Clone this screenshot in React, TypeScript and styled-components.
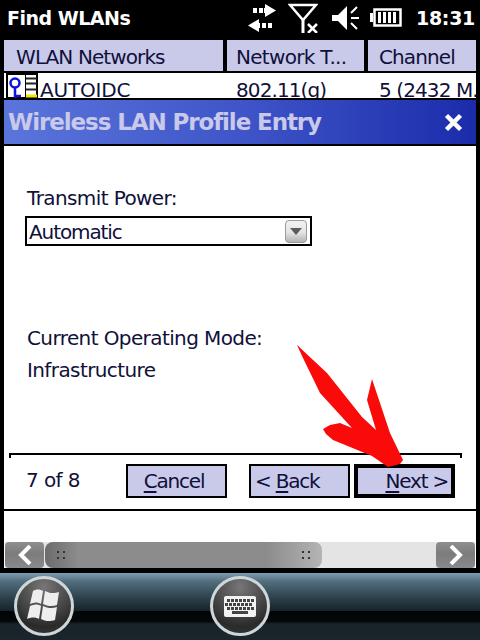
import React from "react";
import styled, { createGlobalStyle } from "styled-components";

const GlobalStyle = createGlobalStyle`
  html, body {
    margin: 0;
    padding: 0;
    background: #000;
  }
  body {
    font-family: "DejaVu Sans", "Liberation Sans", sans-serif;
  }
`;

const Screen = styled.div`
  position: relative;
  width: 480px;
  height: 640px;
  overflow: hidden;
  background: #000;
  display: flex;
  flex-direction: column;
`;

const StatusBar = styled.div`
  height: 40px;
  flex: none;
  display: flex;
  align-items: center;
  padding: 0 5px 5px 7px;
  box-sizing: border-box;
  color: #fff;
`;

const AppTitle = styled.div`
  flex: 1;
  font-size: 19px;
  font-weight: 700;
  letter-spacing: -0.5px;
`;

const StatusIcon = styled.svg<{ $gap?: number }>`
  display: block;
  flex: none;
  margin-left: ${(p) => p.$gap ?? 0}px;
`;

const Clock = styled.div`
  font-size: 19px;
  font-weight: 700;
  letter-spacing: -0.3px;
  margin-left: 14px;
`;

const ListHeader = styled.div`
  height: 31px;
  flex: none;
  margin: 0 4px;
  display: flex;
  gap: 4px;
`;

const HeaderCell = styled.div<{ $width: number; $indent: number; $track: number }>`
  width: ${(p) => p.$width}px;
  flex: none;
  background: #c9c9ea;
  color: #10103a;
  font-size: 20px;
  line-height: 34px;
  padding-left: ${(p) => p.$indent}px;
  box-sizing: border-box;
  white-space: nowrap;
  overflow: hidden;
  letter-spacing: ${(p) => p.$track}px;
`;

const ListRow = styled.div`
  height: 25px;
  flex: none;
  margin: 2px 4px 0;
  background: #fff;
  display: flex;
  overflow: hidden;
  color: #10103a;
`;

const RowCell = styled.div<{ $width: number; $indent: number; $track: number }>`
  width: ${(p) => p.$width}px;
  flex: none;
  display: flex;
  font-size: 20px;
  line-height: 34px;
  padding-left: ${(p) => p.$indent}px;
  box-sizing: border-box;
  white-space: nowrap;
  overflow: hidden;
  letter-spacing: ${(p) => p.$track}px;
`;

const NetworkIcon = styled.svg`
  flex: none;
  display: block;
  margin-right: 2px;
`;

const Dialog = styled.div`
  margin: 2px 4px 0;
  flex: none;
  display: flex;
  flex-direction: column;
`;

const DialogTitle = styled.div`
  height: 44px;
  background: linear-gradient(90deg, #5a75db 0%, #3f55c8 50%, #1b2cab 100%);
  display: flex;
  align-items: center;
  justify-content: space-between;
  padding: 0 13px 0 4px;
`;

const DialogTitleText = styled.div`
  color: #c9c9ea;
  font-size: 23px;
  font-weight: 700;
  letter-spacing: -1.1px;
`;

const DialogBody = styled.div`
  margin-top: 2px;
  height: 365px;
  background: #fff;
  box-sizing: border-box;
  padding: 39px 0 0 21px;
  display: flex;
  flex-direction: column;
  border-bottom: 2px solid #000;
`;

const Label = styled.div`
  color: #10103a;
  font-size: 20px;
  line-height: 26px;
  letter-spacing: -0.6px;
  white-space: nowrap;
`;

const FieldLabel = styled(Label)`
  margin-left: 2px;
`;

const Combo = styled.div`
  width: 287px;
  height: 30px;
  box-sizing: border-box;
  margin-top: 5px;
  border: 2px solid #000;
  display: flex;
  align-items: center;
  justify-content: space-between;
  padding: 1px 3px 0 2px;
  font-size: 20px;
  letter-spacing: -1.1px;
  color: #10103a;
`;

const ComboArrow = styled.div`
  width: 22px;
  height: 23px;
  box-sizing: border-box;
  border: 1px solid #9a9a9a;
  border-radius: 4px;
  background: linear-gradient(180deg, #f2f2f2 0%, #e4e4e4 55%, #b4b4b4 100%);
  display: flex;
  align-items: center;
  justify-content: center;
  &::before {
    content: "";
    border-left: 6px solid transparent;
    border-right: 6px solid transparent;
    border-top: 7px solid #5b5b5b;
  }
`;

const ModeBlock = styled.div`
  margin-top: 79px;
  display: flex;
  flex-direction: column;
  gap: 6px;
`;

const WizardFooter = styled.div`
  margin: 70px 0 0 -16px;
  width: 453px;
  border-top: 2px solid #000;
  position: relative;
  &::before,
  &::after {
    content: "";
    position: absolute;
    top: 0;
    width: 2px;
    height: 3px;
    background: #000;
  }
  &::before {
    left: 0;
  }
  &::after {
    right: 0;
  }
`;

const WizardRow = styled.div`
  display: flex;
  align-items: flex-start;
  margin-top: 9px;
  padding-left: 17px;
`;

const StepText = styled(Label)`
  width: 100px;
  flex: none;
  line-height: 32px;
`;

const WizardButton = styled.div<{
  $active?: boolean;
  $left?: number;
  $align: "center" | "flex-start" | "flex-end";
}>`
  width: 101px;
  height: 34px;
  flex: none;
  box-sizing: border-box;
  margin-left: ${(p) => p.$left ?? 0}px;
  border: ${(p) => (p.$active ? 4 : 2)}px solid #000;
  background: #c9c9ea;
  color: #10103a;
  font-size: 20px;
  letter-spacing: -1.2px;
  white-space: nowrap;
  display: flex;
  align-items: center;
  justify-content: ${(p) => p.$align};
  padding: ${(p) => (p.$align === "center" ? "0 5px 0 0" : "0 3px 0 4px")};
  u {
    text-underline-offset: 3px;
  }
`;

const LowerBand = styled.div`
  margin: 0 4px;
  height: 57px;
  flex: none;
  background: #fff;
  display: flex;
  flex-direction: column;
  justify-content: flex-end;
`;

const ScrollBar = styled.div`
  height: 26px;
  margin: 0 1px;
  display: flex;
  background: #e4e4e4;
`;

const ScrollButton = styled.div`
  width: 39px;
  flex: none;
  border-radius: 4px;
  background: linear-gradient(180deg, #8f8f8f 0%, #7c7c7c 45%, #8a8a8a 100%);
  display: flex;
  align-items: center;
  justify-content: center;
`;

const ScrollThumb = styled.div`
  width: 277px;
  flex: none;
  margin-left: 1px;
  border-radius: 8px;
  background: linear-gradient(
    90deg,
    #6c6c6c 0%,
    #8c8c8c 12%,
    #8c8c8c 80%,
    #b4b4b4 100%
  );
  display: flex;
  align-items: center;
  justify-content: space-between;
  padding: 0 11px;
  box-sizing: border-box;
`;

const Grip = styled.svg`
  display: block;
`;

const ScrollTrack = styled.div`
  flex: 1;
`;

const Taskbar = styled.div`
  margin-top: 5px;
  flex: 1;
  display: flex;
  gap: 136px;
  padding: 3px 0 0 14px;
  box-sizing: border-box;
  background: linear-gradient(
    180deg,
    #7f9db2 0%,
    #53707f 12%,
    #2f444f 35%,
    #18242a 56%,
    #020505 57%,
    #040808 72%,
    #18232a 76%,
    #1a262b 100%
  );
`;

const RoundButton = styled.div`
  width: 60px;
  height: 60px;
  flex: none;
  box-sizing: border-box;
  border-radius: 50%;
  border: 3px solid #cfd6d8;
  background: radial-gradient(
    circle at 50% 15%,
    #777 0%,
    #4a4a4a 45%,
    #2a2a2a 75%,
    #3c3c3c 100%
  );
  display: flex;
  align-items: center;
  justify-content: center;
`;

const RedArrow = styled.svg`
  position: absolute;
  left: 290px;
  top: 338px;
`;

const keyRows = [
  { y: 3, xs: [3, 7, 11, 15, 19, 23, 27] },
  { y: 7, xs: [1, 5, 9, 13, 17, 21, 25] },
  { y: 11, xs: [3, 7, 11, 15, 19, 23, 27] },
];

const App: React.FC = () => {
  return (
    <Screen>
      <GlobalStyle />
      <StatusBar>
        <AppTitle>Find WLANs</AppTitle>
        <StatusIcon width="30" height="28" viewBox="0 0 30 28" fill="#fff">
          <path d="M6 4h4v5H6zM12 4h4v5h-4zM18 4v-4l11 6.5L18 13V9h-1V4z" />
          <path d="M12 15v4h1v5h-1v4L1 21.5zM15 19h4v5h-4zM21 19h4v5h-4z" />
        </StatusIcon>
        <StatusIcon
          $gap={11}
          width="30"
          height="30"
          viewBox="0 0 30 30"
          fill="none"
          stroke="#fff"
        >
          <path d="M2 2h26L15 17z" strokeWidth="2.5" />
          <path d="M15 16v14" strokeWidth="3" />
          <path d="M20 21l9 9M29 21l-9 9" strokeWidth="2.5" />
        </StatusIcon>
        <StatusIcon
          $gap={13}
          width="28"
          height="26"
          viewBox="0 0 28 26"
          fill="#fff"
          stroke="#fff"
        >
          <path d="M1 10h6l9-9v24l-9-9H1z" strokeWidth="0" />
          <path d="M20 8l6-6M20 13h8M20 18l6 6" strokeWidth="2" fill="none" />
        </StatusIcon>
        <StatusIcon
          $gap={11}
          width="32"
          height="19"
          viewBox="0 0 32 19"
          fill="#fff"
        >
          <path d="M0 5h3v9H0z" />
          <path
            d="M4.5 1.5h26v16h-26z"
            fill="none"
            stroke="#fff"
            strokeWidth="2.5"
          />
          <path d="M8 4h3v11H8zM13 4h3v11h-3zM18 4h3v11h-3zM23 4h3v11h-3z" />
        </StatusIcon>
        <Clock>18:31</Clock>
      </StatusBar>

      <ListHeader>
        <HeaderCell $width={219} $indent={12} $track={-0.9}>
          WLAN Networks
        </HeaderCell>
        <HeaderCell $width={137} $indent={9} $track={-0.7}>
          Network T...
        </HeaderCell>
        <HeaderCell $width={108} $indent={11} $track={-0.9}>
          Channel
        </HeaderCell>
      </ListHeader>

      <ListRow>
        <RowCell $width={223} $indent={2} $track={-0.2}>
          <NetworkIcon width="32" height="25" viewBox="0 0 32 25">
            <path d="M1 1h30v24H1z" fill="#fff" stroke="#000" strokeWidth="2" />
            <path d="M19.5 1v24" stroke="#000" strokeWidth="1" />
            <circle
              cx="9"
              cy="10"
              r="4.5"
              fill="none"
              stroke="#1010e0"
              strokeWidth="2.5"
            />
            <path d="M9 14v11M9 23h6" stroke="#1010e0" strokeWidth="2.5" />
            <path
              d="M20 5.5h11M20 10.5h11M20 16.5h11"
              stroke="#222"
              strokeWidth="2"
            />
            <path d="M20 23h11" stroke="#f0e800" strokeWidth="3" />
          </NetworkIcon>
          <span>AUTOIDC</span>
        </RowCell>
        <RowCell $width={141} $indent={9} $track={-0.9}>
          802.11(g)
        </RowCell>
        <RowCell $width={108} $indent={11} $track={-0.9}>
          5 (2432 M..
        </RowCell>
      </ListRow>

      <Dialog>
        <DialogTitle>
          <DialogTitleText>Wireless LAN Profile Entry</DialogTitleText>
          <svg width="19" height="19" viewBox="0 0 19 19">
            <path
              d="M2.5 2.5l14 14M16.5 2.5l-14 14"
              stroke="#fff"
              strokeWidth="4.5"
            />
          </svg>
        </DialogTitle>
        <DialogBody>
          <FieldLabel>Transmit Power:</FieldLabel>
          <Combo>
            <span>Automatic</span>
            <ComboArrow />
          </Combo>
          <ModeBlock>
            <FieldLabel>Current Operating Mode:</FieldLabel>
            <FieldLabel>Infrastructure</FieldLabel>
          </ModeBlock>
          <WizardFooter>
            <WizardRow>
              <StepText>7 of 8</StepText>
              <WizardButton $align="center">
                <span>
                  <u>C</u>ancel
                </span>
              </WizardButton>
              <WizardButton $align="flex-start" $left={22}>
                <span>
                  &lt; <u>B</u>ack
                </span>
              </WizardButton>
              <WizardButton $align="flex-end" $active $left={4}>
                <span>
                  <u>N</u>ext &gt;
                </span>
              </WizardButton>
            </WizardRow>
          </WizardFooter>
        </DialogBody>
      </Dialog>

      <LowerBand>
        <ScrollBar>
          <ScrollButton>
            <svg width="16" height="20" viewBox="0 0 16 20">
              <path
                d="M13 1L4 10l9 9"
                fill="none"
                stroke="#fff"
                strokeWidth="4"
              />
            </svg>
          </ScrollButton>
          <ScrollThumb>
            <Grip width="10" height="10" viewBox="0 0 10 10" fill="#333">
              <path d="M1 1h2v2H1zM7 1h2v2H7zM1 7h2v2H1zM7 7h2v2H7z" />
            </Grip>
            <Grip width="10" height="10" viewBox="0 0 10 10" fill="#333">
              <path d="M1 1h2v2H1zM7 1h2v2H7zM1 7h2v2H1zM7 7h2v2H7z" />
            </Grip>
          </ScrollThumb>
          <ScrollTrack />
          <ScrollButton>
            <svg width="16" height="20" viewBox="0 0 16 20">
              <path
                d="M3 1l9 9-9 9"
                fill="none"
                stroke="#fff"
                strokeWidth="4"
              />
            </svg>
          </ScrollButton>
        </ScrollBar>
      </LowerBand>

      <Taskbar>
        <RoundButton>
          <svg width="34" height="36" viewBox="0 0 34 36" fill="#eee">
            <path d="M6 3c3-2 7-2 10 0l-2 13c-3-2-7-2-11 0z" />
            <path d="M18 3c4 2 8 3 14 1l-2 13c-5 2-10 1-14-1z" />
            <path d="M3 18c4-2 8-2 11 0l-2 13c-3-2-8-2-12 0z" />
            <path d="M16 18c4 2 9 3 14 1l-2 13c-6 2-10 1-14-1z" />
          </svg>
        </RoundButton>
        <RoundButton>
          <svg width="32" height="21" viewBox="0 0 32 21">
            <rect width="32" height="21" rx="2" fill="#f2f2f2" />
            {keyRows.map((row) =>
              row.xs.map((x) => (
                <rect
                  key={`${row.y}-${x}`}
                  x={x}
                  y={row.y}
                  width="3"
                  height="3"
                  fill="#444"
                />
              ))
            )}
            <path d="M8 15h16v3H8z" fill="#444" />
          </svg>
        </RoundButton>
      </Taskbar>

      <RedArrow width="120" height="140" viewBox="0 0 120 140">
        <path
          fill="#f7a0a0"
          d="M7 7 L18 28 L36 58 L60 88 L70 84 L42 44 Z"
        />
        <path
          fill="#fb0a0a"
          d="M7 7 L37 35 L72 79 L86 92 L77 62 L82 41 L90 65 L100 95 L113 122 L110 126 L98 129 L82 118 L43 102 L36 96 L33 91 L40 87 L50 85 L62 90 L30 55 L13 20 Z"
        />
      </RedArrow>
    </Screen>
  );
};

export default App;
